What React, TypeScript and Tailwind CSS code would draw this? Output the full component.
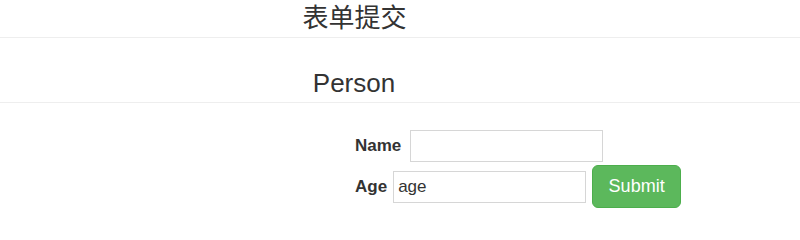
export default function App() {
  return (
    <div className="w-[800px] bg-white text-[#333] font-['Liberation_Sans','Noto_Sans_CJK_SC',sans-serif]">
      <h1 className="h-[38px] border-b border-[#eee] pr-[91px] text-center text-[26px] leading-[36px] font-normal font-['Liberation_Sans','Noto_Sans_CJK_SC',sans-serif]">
        表单提交
      </h1>
      <h2 className="h-[65px] border-b border-[#eee] pt-[30px] pr-[92px] text-center text-[26px] leading-[30px] font-normal">
        Person
      </h2>
      <form className="flex flex-col gap-[3px] pt-[27px] pl-[355px]" onSubmit={e => e.preventDefault()}>
        <div className="flex items-center h-[32px]">
          <label className="text-[17px] font-bold mr-[9px]">Name</label>
          <input className="w-[193px] h-[32px] border border-[#d6d6d6] px-[4px] text-[17px] outline-none" />
        </div>
        <div className="flex items-center h-[43px]">
          <label className="text-[17px] font-bold mr-[6px]">Age</label>
          <input
            className="w-[193px] h-[32px] border border-[#d6d6d6] px-[4px] text-[17px] text-[#333] outline-none"
            defaultValue="age"
          />
          <button
            type="submit"
            className="ml-[6px] w-[89px] h-[43px] rounded-[6px] bg-[#5cb85c] border border-[#4cae4c] text-white text-[18px]"
          >
            Submit
          </button>
        </div>
      </form>
    </div>
  );
}
